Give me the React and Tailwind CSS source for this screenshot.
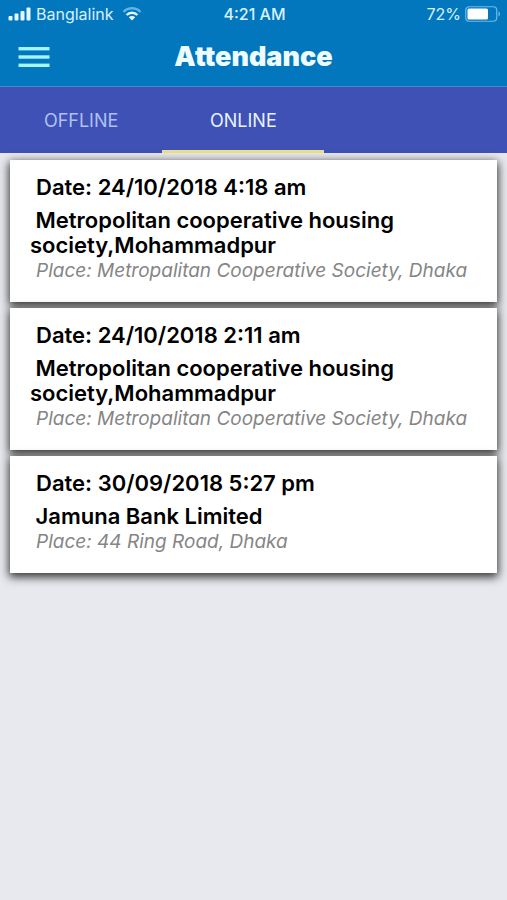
import React, { useState } from "react";

const records = [
  {
    id: 1,
    date: "24/10/2018 4:18 am",
    name: " Metropolitan cooperative housing society,Mohammadpur",
    place: "Metropalitan Cooperative Society, Dhaka",
  },
  {
    id: 2,
    date: "24/10/2018 2:11 am",
    name: " Metropolitan cooperative housing society,Mohammadpur",
    place: "Metropalitan Cooperative Society, Dhaka",
  },
  {
    id: 3,
    date: "30/09/2018 5:27 pm",
    name: " Jamuna Bank Limited",
    place: "44 Ring Road, Dhaka",
  },
];

function StatusBar() {
  return (
    <div className="grid grid-cols-3 items-center h-7 pl-2 pr-1.5 text-base text-[#d8f1ff]">
      <div className="flex items-center gap-1">
        <svg width="24" height="14" viewBox="0 0 24 14" fill="#e4f8ff">
          <rect x="0.5" y="9" width="4" height="4.5" rx="1" />
          <rect x="6.5" y="6.5" width="4" height="7" rx="1" />
          <rect x="12.5" y="4" width="4" height="9.5" rx="1" />
          <rect x="18.5" y="0.5" width="4" height="13" rx="1" />
        </svg>
        <span>Banglalink</span>
        <svg className="ml-1" width="20" height="14" viewBox="0 0 20 14" fill="none">
          <path d="M1.5 4.8a12 12 0 0 1 17 0" stroke="#62b4e4" strokeWidth="2.4" />
          <path d="M4.6 8a7.6 7.6 0 0 1 10.8 0" stroke="#e4f8ff" strokeWidth="2.4" />
          <path d="M10 13.5 6.8 10.2a4.6 4.6 0 0 1 6.4 0z" fill="#e4f8ff" />
        </svg>
      </div>
      <div className="text-center font-medium">4:21 AM</div>
      <div className="flex items-center justify-end gap-1">
        <span>72%</span>
        <svg width="36" height="16" viewBox="0 0 36 16" fill="none">
          <rect x="0.75" y="0.75" width="31" height="14.5" rx="3.5" stroke="#6fbbe8" strokeWidth="1.2" />
          <rect x="2.5" y="2.5" width="20.5" height="11" rx="1.5" fill="#fff" />
          <path d="M33.5 5.5c2 .8 2 4.2 0 5z" fill="#6fbbe8" />
        </svg>
      </div>
    </div>
  );
}

function Header() {
  return (
    <header className="bg-[#0277bd] border-b border-[#4a86c8]">
      <StatusBar />
      <div className="grid grid-cols-[48px_1fr_48px] items-center h-[58px] px-2">
        <button aria-label="Menu" className="flex justify-center pl-1">
          <svg width="32" height="22" viewBox="0 0 32 22" fill="#a5f6fb">
            <rect x="0.5" y="1" width="31" height="3.4" />
            <rect x="0.5" y="9.3" width="31" height="3.4" />
            <rect x="0.5" y="17.6" width="31" height="3.4" />
          </svg>
        </button>
        <h1 className="text-center text-[27px] font-black text-[#edfcff]">
          Attendance
        </h1>
      </div>
    </header>
  );
}

function Tabs({ active, onChange }) {
  return (
    <nav className="flex h-[66px] bg-[#3f51b5]">
      {["OFFLINE", "ONLINE"].map((tab) => (
        <button
          key={tab}
          onClick={() => onChange(tab)}
          className={
            active === tab
              ? "w-[32%] pt-1 text-lg text-[#e6f3ff] border-b-3 border-[#e8e08a]"
              : "w-[32%] pt-1 text-lg text-[#b0c0f0] border-b-3 border-transparent"
          }
        >
          {tab}
        </button>
      ))}
    </nav>
  );
}

function RecordCard({ record }) {
  return (
    <li className="bg-white pt-3.5 pb-[18px] px-5 shadow-[0_3px_9px_1px_rgba(0,0,0,0.8)]">
      <p className="pl-1.5 text-[22px]/[26px] font-semibold text-black">
        Date: {record.date}
      </p>
      <h2 className="mt-2 text-[22px]/[25px] font-semibold text-black whitespace-pre-wrap">
        {record.name}
      </h2>
      <p className="pl-1.5 text-[19px]/[26px] italic text-[#858585]">
        Place: {record.place}
      </p>
    </li>
  );
}

function App() {
  const [active, setActive] = useState("ONLINE");

  return (
    <div className="min-h-screen bg-[#e8e9ee] font-['Inter',sans-serif]">
      <Header />
      <Tabs active={active} onChange={setActive} />
      <main className="px-2.5 pt-[7px] pb-6">
        <ul className="flex flex-col gap-1.5">
          {records.map((record) => (
            <RecordCard key={record.id} record={record} />
          ))}
        </ul>
      </main>
    </div>
  );
}

export default App;
